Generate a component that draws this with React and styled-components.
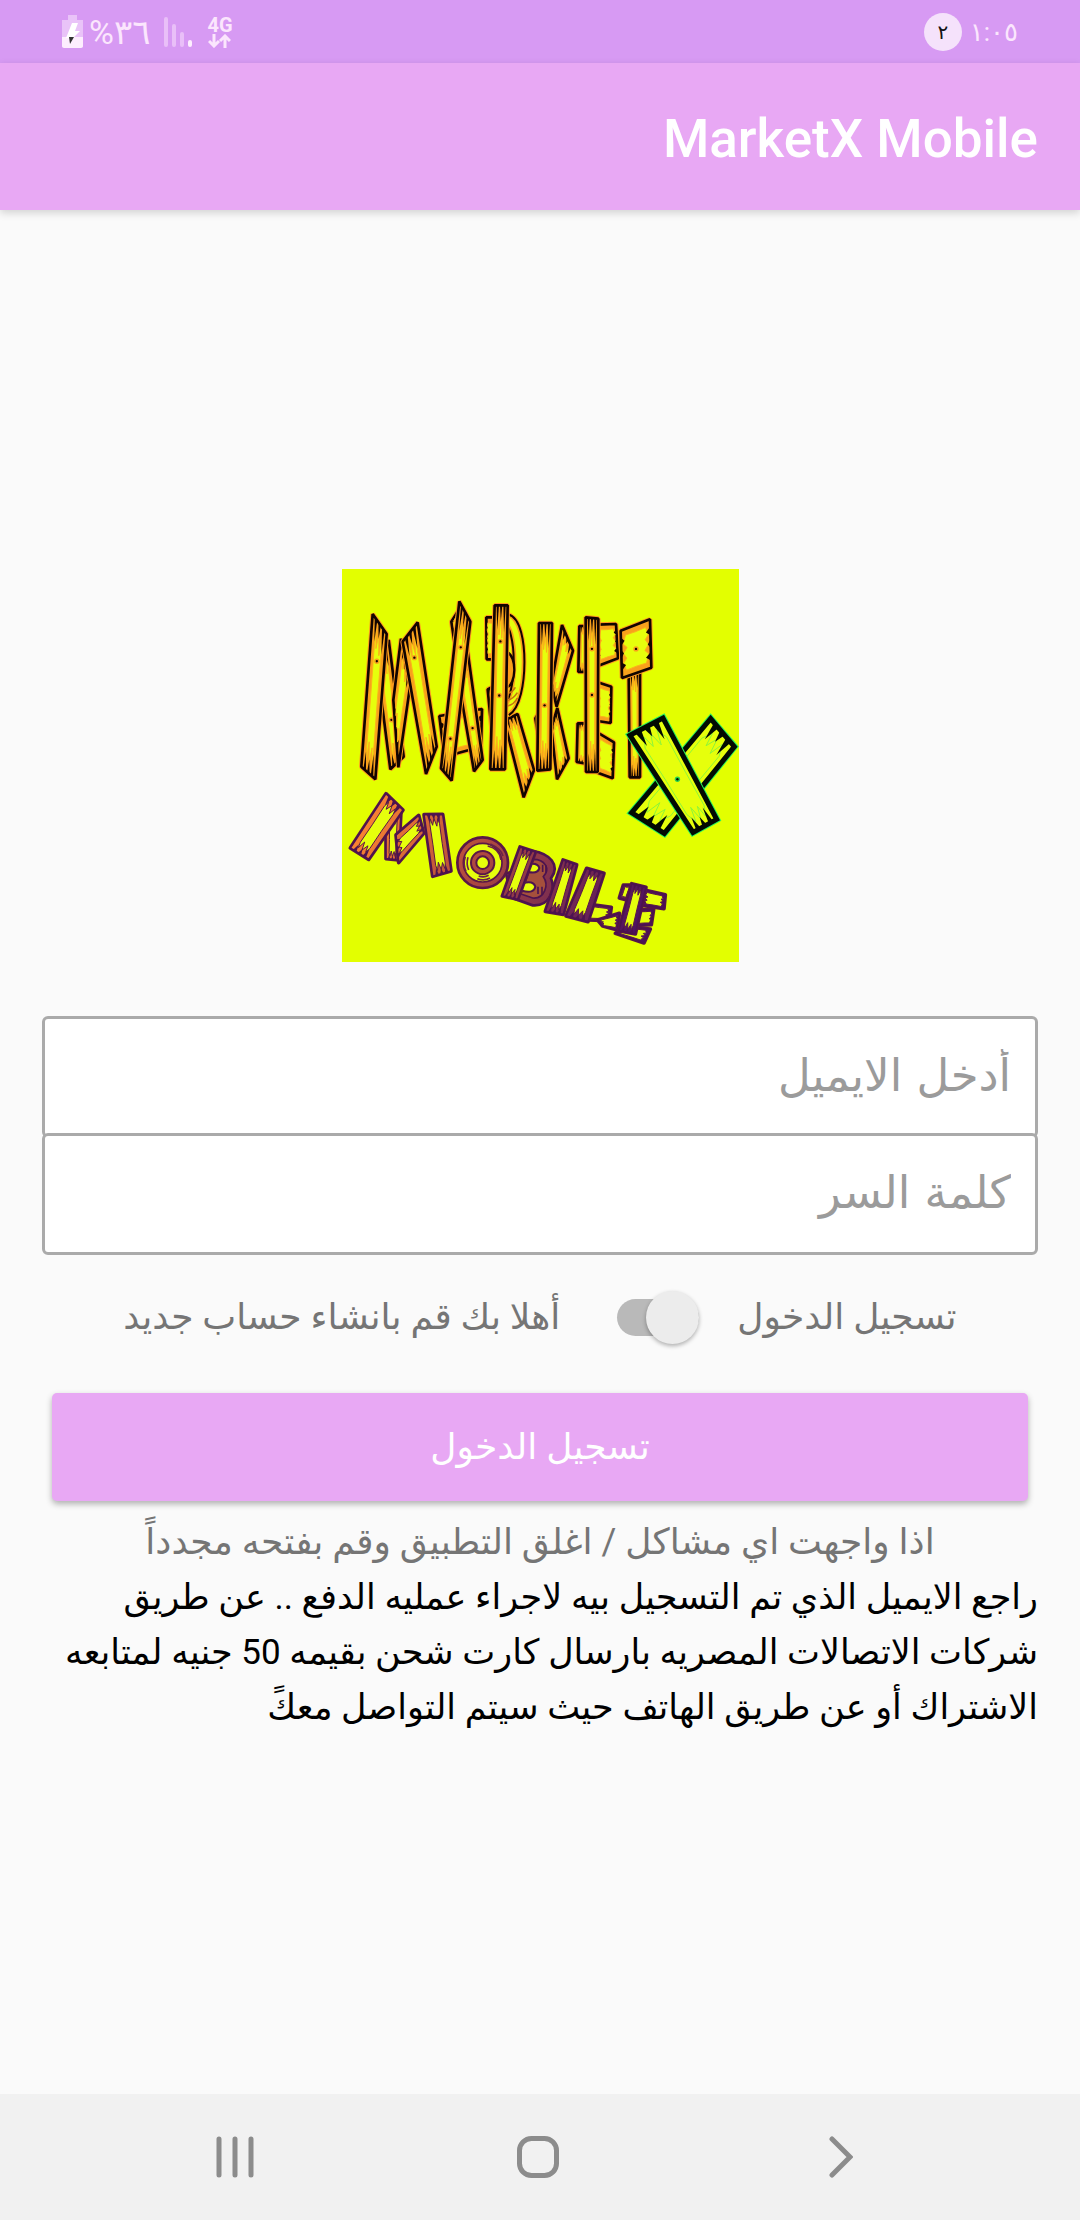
import React, { useState } from "react";
import styled, { createGlobalStyle } from "styled-components";

const GlobalStyle = createGlobalStyle`
  * { box-sizing: border-box; }
  body { margin: 0; background: #fafafa; }
`;

const Screen = styled.div`
  min-height: 100vh;
  display: flex;
  flex-direction: column;
  background: #fafafa;
  color: #000;
  font-family: Roboto, "DejaVu Sans", sans-serif;
`;

const StatusBar = styled.div`
  height: 63px;
  padding: 0 62px;
  display: flex;
  align-items: center;
  justify-content: space-between;
  background: #d79af3;
  color: #fbe6fd;
`;

const StatusGroup = styled.div`
  display: flex;
  align-items: center;
  gap: ${(p) => p.$gap}px;
`;

const StatusText = styled.span`
  font-size: ${(p) => (p.$large ? 34 : 26)}px;
  line-height: 36px;
`;

const Badge = styled.span`
  width: 38px;
  height: 38px;
  border-radius: 50%;
  display: grid;
  place-items: center;
  background: #f5e2fb;
  color: #111;
  font-size: 20px;
  line-height: 24px;
`;

const Network = styled.span`
  display: flex;
  flex-direction: column;
  align-items: center;
  font-size: 20px;
  line-height: 18px;
  font-weight: 700;
`;

const AppBar = styled.header`
  height: 147px;
  padding: 4px 42px 0;
  display: flex;
  align-items: center;
  background: #e8a8f4;
  box-shadow: 0 3px 8px rgba(0, 0, 0, 0.16);
`;

const Title = styled.h1`
  margin: 0;
  color: #fff;
  font-size: 53px;
  line-height: 64px;
  font-weight: 500;
`;

const Main = styled.main`
  flex: 1;
  padding: 0 42px;
  display: flex;
  flex-direction: column;
  justify-content: center;
`;

const Logo = styled.svg`
  width: 397px;
  height: 393px;
  display: block;
  align-self: center;
  margin-bottom: 54px;
`;

const Form = styled.form`
  display: flex;
  flex-direction: column;
`;

const Field = styled.input`
  width: 100%;
  height: 122px;
  margin: 0;
  padding: 0 24px 4px;
  border: 3px solid #aaa;
  border-radius: 6px;
  background: #fff;
  color: #222;
  font-family: "DejaVu Sans", sans-serif;
  font-size: 45px;
  outline: none;
  & + & { margin-top: -5px; }
  &::placeholder { color: #9b9b9b; opacity: 1; }
`;

const SwitchRow = styled.div`
  margin-top: 26px;
  height: 72px;
  display: flex;
  align-items: center;
  justify-content: center;
`;

const SwitchLabel = styled.label`
  color: #757575;
  font-size: 36px;
  line-height: 55px;
`;

const Switch = styled.input`
  appearance: none;
  width: 82px;
  height: 37px;
  margin: 0 38px 0 57px;
  border-radius: 19px;
  background: #b9b9b9;
  display: flex;
  align-items: center;
  justify-content: ${(p) => (p.checked ? "flex-end" : "flex-start")};
  &::before {
    content: "";
    flex: none;
    width: 53px;
    height: 53px;
    border-radius: 50%;
    background: #ececec;
    box-shadow: 0 2px 4px rgba(0, 0, 0, 0.3);
  }
`;

const Submit = styled.button`
  height: 108px;
  margin: 40px 10px 0;
  border: 0;
  border-radius: 5px;
  background: #e8a8f4;
  box-shadow: 0 3px 6px rgba(0, 0, 0, 0.3);
  color: #fff;
  font-family: inherit;
  font-size: 36px;
  line-height: 55px;
`;

const Note = styled.p`
  margin: ${(p) => (p.$muted ? "14px 0 0" : "0")};
  color: ${(p) => (p.$muted ? "#757575" : "#000")};
  text-align: ${(p) => (p.$muted ? "center" : "start")};
  font-size: ${(p) => (p.$muted ? 36 : 35)}px;
  line-height: 55px;
`;

const NavBar = styled.nav`
  height: 126px;
  padding: 0 166px 0 162px;
  display: flex;
  direction: ltr;
  align-items: center;
  justify-content: space-between;
  background: #f1f1f1;
`;

const NavButton = styled.button`
  width: 146px;
  height: 100px;
  padding: 0;
  border: 0;
  background: none;
  display: grid;
  place-items: center;
`;

const at = (q, u, v) => {
  const [a, b, c, d] = q;
  return [0, 1].map((i) => {
    const top = a[i] + (b[i] - a[i]) * u;
    const bottom = d[i] + (c[i] - d[i]) * u;
    return top + (bottom - top) * v;
  });
};
const pts = (list) => list.map((p) => p.join(",")).join(" ");

// A wooden board: corners run clockwise from the top left one.
function Board({ q, look, turned, nails = [] }) {
  const quad = turned ? [q[1], q[2], q[3], q[0]] : q;
  const p = (u, v) => at(quad, u, v);
  const e = turned ? look.edge / 2 : look.edge;
  const core = [
    p(e, 0.16), p(0.3, 0.07), p(0.38, 0.18), p(0.5, 0.07), p(0.6, 0.2), p(0.7, 0.07), p(1 - e, 0.16),
    p(0.99 - e, 0.5), p(1 - e, 0.84), p(0.7, 0.93), p(0.62, 0.82), p(0.5, 0.93), p(0.4, 0.8), p(0.3, 0.93), p(e, 0.84), p(e + 0.01, 0.5),
  ];
  return (
    <g>
      <polygon points={pts(quad)} fill="none" stroke={look.rim} strokeWidth={look.line + 6} strokeLinejoin={look.join} />
      <polygon points={pts(quad)} fill={look.wood} stroke={look.ink} strokeWidth={look.line} strokeLinejoin={look.join} />
      <polygon points={pts(core)} fill="#e6ff0c" stroke={look.seam} strokeWidth="3" />
      {[0.24, 0.5, 0.76].map((u, i) => (
        <g key={u} fill={look.ink}>
          <polygon points={pts([p(u - 0.09, 0), p(u + 0.09, 0), p(u, [0.15, 0.1, 0.17][i])])} />
          <polygon points={pts([p(u - 0.09, 1), p(u + 0.09, 1), p(u, [0.88, 0.91, 0.85][i])])} />
        </g>
      ))}
      {nails.map((v) => {
        const [x, y] = p(0.5, v);
        return <g key={v}><circle cx={x} cy={y} r="8" fill={look.knot} /><circle cx={x} cy={y} r="3.5" fill={look.ink} /></g>;
      })}
    </g>
  );
}

const amber = { rim: "#ff9a1f", ink: "#120400", wood: "#f9a01c", seam: "#fbb41a", knot: "#f9a01c", line: 8, join: "bevel", edge: 0.26 };
const green = { rim: "#27f25a", ink: "#020a02", wood: "#e6ff0c", seam: "#8cf53a", knot: "#27d34c", line: 15, join: "miter", edge: 0.16 };
const dusk = { rim: "#5a1747", ink: "#4c1350", wood: "url(#dusk)", seam: "#5a1747", knot: "#a8443a", line: 5, join: "round", edge: 0.24 };

const marketBack = [
  { q: [[125, 330], [158, 240], [203, 590], [163, 628]], nails: [0.6] },
  { q: [[195, 236], [222, 380], [187, 622], [172, 420]] },
  { q: [[200, 245], [245, 187], [302, 560], [270, 642]], nails: [0.2] },
  { q: [[110, 162], [152, 222], [118, 658], [76, 620]], nails: [0.25] },
  { q: [[310, 468], [438, 447], [435, 560], [325, 590]], turned: true },
  { q: [[346, 185], [365, 155], [378, 235], [355, 245]] },
  { q: [[362, 330], [393, 260], [440, 600], [414, 634]], nails: [0.65] },
  { q: [[370, 124], [403, 185], [347, 662], [315, 625]], nails: [0.22, 0.78] },
  { q: [[451, 172], [480, 172], [480, 298], [452, 298]], turned: true },
  { q: [[455, 388], [480, 375], [480, 520], [468, 520]] },
  { q: [[505, 482], [545, 462], [594, 630], [563, 712]] },
];
const marketFront = [
  { q: [[476, 136], [515, 136], [507, 628], [463, 628]], nails: [0.22, 0.55] },
  { q: [[598, 475], [610, 455], [612, 520], [606, 525]] },
  { q: [[678, 195], [711, 272], [662, 440], [646, 375]] },
  { q: [[646, 505], [664, 444], [698, 595], [663, 658]] },
  { q: [[609, 189], [648, 189], [643, 628], [604, 632]], nails: [0.56] },
  { q: [[730, 198], [755, 198], [755, 336], [727, 336]] },
  { q: [[725, 490], [755, 490], [755, 612], [722, 606]] },
  { q: [[785, 194], [840, 192], [846, 295], [785, 318]], turned: true },
  { q: [[785, 367], [826, 380], [824, 489], [785, 483]], turned: true },
  { q: [[785, 518], [834, 547], [830, 655], [785, 638]], turned: true },
  { q: [[749, 172], [787, 176], [785, 636], [750, 636]], nails: [0.2, 0.5] },
  { q: [[878, 335], [912, 330], [912, 652], [881, 652]] },
  { q: [[854, 212], [942, 178], [946, 323], [858, 354]], turned: true, nails: [0.5] },
];
const cross = [
  { q: [[1124, 476], [1195, 560], [985, 820], [887, 758]] },
  { q: [[882, 526], [981, 474], [1142, 778], [1071, 817]], nails: [0.53] },
];
const mobileBack = [
  { q: [[150, 160], [195, 122], [188, 270], [150, 266]] },
  { q: [[248, 136], [263, 190], [188, 278], [180, 195]] },
  { q: [[150, 71], [201, 120], [98, 268], [43, 234]] },
  { q: [[264, 134], [320, 133], [345, 303], [290, 319]] },
  { q: [[512, 312], [545, 300], [540, 345], [518, 340]] },
];
const mobileFront = [
  { q: [[552, 231], [598, 246], [545, 388], [499, 378]] },
  { q: [[755, 402], [826, 412], [820, 452], [755, 450]], turned: true },
  { q: [[681, 270], [722, 284], [682, 433], [628, 424]] },
  { q: [[752, 295], [804, 310], [756, 455], [690, 438]] },
  { q: [[785, 450], [850, 430], [845, 480], [800, 468]], turned: true },
  { q: [[862, 345], [890, 345], [872, 390], [850, 384]] },
  { q: [[925, 360], [988, 374], [984, 416], [920, 406]], turned: true },
  { q: [[905, 420], [953, 418], [946, 464], [900, 466]], turned: true },
  { q: [[870, 470], [943, 477], [924, 519], [838, 490]], turned: true },
  { q: [[887, 341], [930, 352], [898, 492], [848, 482]] },
];

function Arc({ d, look, width }) {
  return (
    <g fill="none">
      <path d={d} stroke={look.rim} strokeWidth={width + 14} />
      <path d={d} stroke={look.ink} strokeWidth={width + 8} />
      <path d={d} stroke={look.wood} strokeWidth={width - 4} />
      <path d={d} stroke="#e6ff0c" strokeWidth={width - 14} />
    </g>
  );
}

function MarketLogo() {
  return (
    <Logo viewBox="0 0 1191 1179" role="img" aria-label="MarketX Mobile">
      <defs>
        <linearGradient id="dusk" gradientUnits="userSpaceOnUse" x1="120" y1="80" x2="900" y2="500">
          <stop offset="0" stopColor="#fb8430" />
          <stop offset="0.35" stopColor="#b9503c" />
          <stop offset="0.7" stopColor="#7a2c50" />
          <stop offset="1" stopColor="#4c1162" />
        </linearGradient>
      </defs>
      <rect width="1191" height="1179" fill="#e3ff00" />
      <g transform="translate(-18 -27)">
        {marketBack.map((b, i) => <Board key={i} look={amber} {...b} />)}
        <Arc d="M512 178C562 190 562 420 510 452" look={amber} width={30} />
        <path d="M512 275C545 290 540 375 512 382Z" fill="#f9a01c" stroke="#120400" strokeWidth="7" />
        <path d="M512 400q15 0 26-18M512 420q18 0 32-22M514 438q20-4 30-24" fill="none" stroke="#c87410" strokeWidth="5" />
        {marketFront.map((b, i) => <Board key={i} look={amber} {...b} />)}
        {cross.map((b, i) => <Board key={i} look={green} {...b} />)}
      </g>
      <g transform="translate(-18 603)">
        {mobileBack.map((b, i) => <Board key={i} look={dusk} {...b} />)}
        <circle cx="440" cy="278" r="76" fill="url(#dusk)" stroke="#5a1747" strokeWidth="8" />
        <circle cx="440" cy="278" r="58" fill="#e6ff0c" stroke="#5a1747" strokeWidth="5" />
        <path d="M455 228q36 8 40 42M463 222q32 14 38 36M388 260q-8 22 2 44M396 262q-6 20 2 38M424 326q20 8 38-2M428 318q16 6 30-2" fill="none" stroke="#6b2148" strokeWidth="5" />
        <circle cx="440" cy="278" r="35" fill="url(#dusk)" stroke="#5a1747" strokeWidth="6" />
        <circle cx="440" cy="278" r="19" fill="#e6ff0c" stroke="#5a1747" strokeWidth="6" />
        <path d="M590 243C640 250 675 285 645 325C660 360 640 410 590 406L540 388Z" fill="url(#dusk)" stroke="#4c1350" strokeWidth="8" />
        <path d="M592 268C625 268 645 295 622 320C640 345 625 388 590 384L555 372Z" fill="#a5503c" stroke="#4c1350" strokeWidth="5" />
        <path d="M580 282q26-4 30 12q-4 18-32 12ZM560 340q32-10 38 10q-4 22-40 12Z" fill="#e6ff0c" stroke="#4c1350" strokeWidth="6" />
        <path d="M620 284v22M630 286v22M606 350v22M618 350v24" stroke="#4c1350" strokeWidth="5" />
        {mobileFront.map((b, i) => <Board key={i} look={dusk} {...b} />)}
      </g>
    </Logo>
  );
}

function BatteryIcon() {
  return (
    <svg width="21" height="33" viewBox="0 0 21 33" aria-hidden="true">
      <path d="M6 0h9v5h6v27H0V5h6z" fill="#e9c3f8" />
      <path d="M0 22h21v9q0 2-2 2H2q-2 0-2-2z" fill="#fdeefe" />
      <path d="M10 8h6l-3 8h5l-7 7H4z" fill="#fff" />
      <path d="M7 22h5l-4 7z" fill="#333" />
    </svg>
  );
}

function SignalIcon() {
  return (
    <svg width="29" height="30" viewBox="0 0 29 30" strokeWidth="4" strokeLinecap="round" aria-hidden="true">
      <path d="M2 2v26M10 9v19M18 17v11" stroke="#e9bff8" />
      <path d="M26 25v3" stroke="#fdeefe" />
    </svg>
  );
}

export default function App() {
  const [isNew, setIsNew] = useState(false);
  return (
    <Screen dir="rtl" lang="ar">
      <GlobalStyle />
      <StatusBar>
        <StatusGroup $gap={8}>
          <StatusText>١:٠٥</StatusText>
          <Badge>٢</Badge>
        </StatusGroup>
        <StatusGroup $gap={14} dir="ltr">
          <StatusGroup $gap={6}>
            <BatteryIcon />
            <StatusText $large>%٣٦</StatusText>
          </StatusGroup>
          <SignalIcon />
          <Network>
            4G
            <svg width="23" height="14" viewBox="0 0 23 14" fill="none" stroke="currentColor" strokeWidth="3" aria-hidden="true">
              <path d="M6 0v12M1 7l5 5 5-5M17 14V2M12 7l5-5 5 5" />
            </svg>
          </Network>
        </StatusGroup>
      </StatusBar>
      <AppBar>
        <Title>MarketX Mobile</Title>
      </AppBar>
      <Main>
        <MarketLogo />
        <Form onSubmit={(e) => e.preventDefault()}>
          <Field type="email" dir="rtl" aria-label="أدخل الايميل" placeholder="أدخل الايميل" />
          <Field type="password" dir="rtl" aria-label="كلمة السر" placeholder="كلمة السر" />
          <SwitchRow>
            <SwitchLabel htmlFor="mode">تسجيل الدخول</SwitchLabel>
            <Switch id="mode" type="checkbox" role="switch" checked={isNew} onChange={(e) => setIsNew(e.target.checked)} />
            <SwitchLabel htmlFor="mode">أهلا بك قم بانشاء حساب جديد</SwitchLabel>
          </SwitchRow>
          <Submit type="submit">تسجيل الدخول</Submit>
        </Form>
        <Note $muted>اذا واجهت اي مشاكل / اغلق التطبيق وقم بفتحه مجدداً</Note>
        <Note>
          راجع الايميل الذي تم التسجيل بيه لاجراء عمليه الدفع .. عن طريق شركات الاتصالات المصريه بارسال كارت شحن بقيمه 50 جنيه لمتابعه الاشتراك أو عن طريق الهاتف حيث سيتم التواصل معكً
        </Note>
      </Main>
      <NavBar>
        <NavButton aria-label="Recents">
          <svg width="38" height="42" viewBox="0 0 38 42" stroke="#8c8c8c" strokeWidth="5" strokeLinecap="round">
            <path d="M3 3v36M19 3v36M35 3v36" />
          </svg>
        </NavButton>
        <NavButton aria-label="Home">
          <svg width="42" height="42" viewBox="0 0 42 42" fill="none" stroke="#8c8c8c" strokeWidth="5">
            <rect x="2.5" y="2.5" width="37" height="37" rx="12" />
          </svg>
        </NavButton>
        <NavButton aria-label="Back">
          <svg width="24" height="42" viewBox="0 0 24 42" fill="none" stroke="#8c8c8c" strokeWidth="5" strokeLinecap="round">
            <path d="M3 3l18 18L3 39" />
          </svg>
        </NavButton>
      </NavBar>
    </Screen>
  );
}
